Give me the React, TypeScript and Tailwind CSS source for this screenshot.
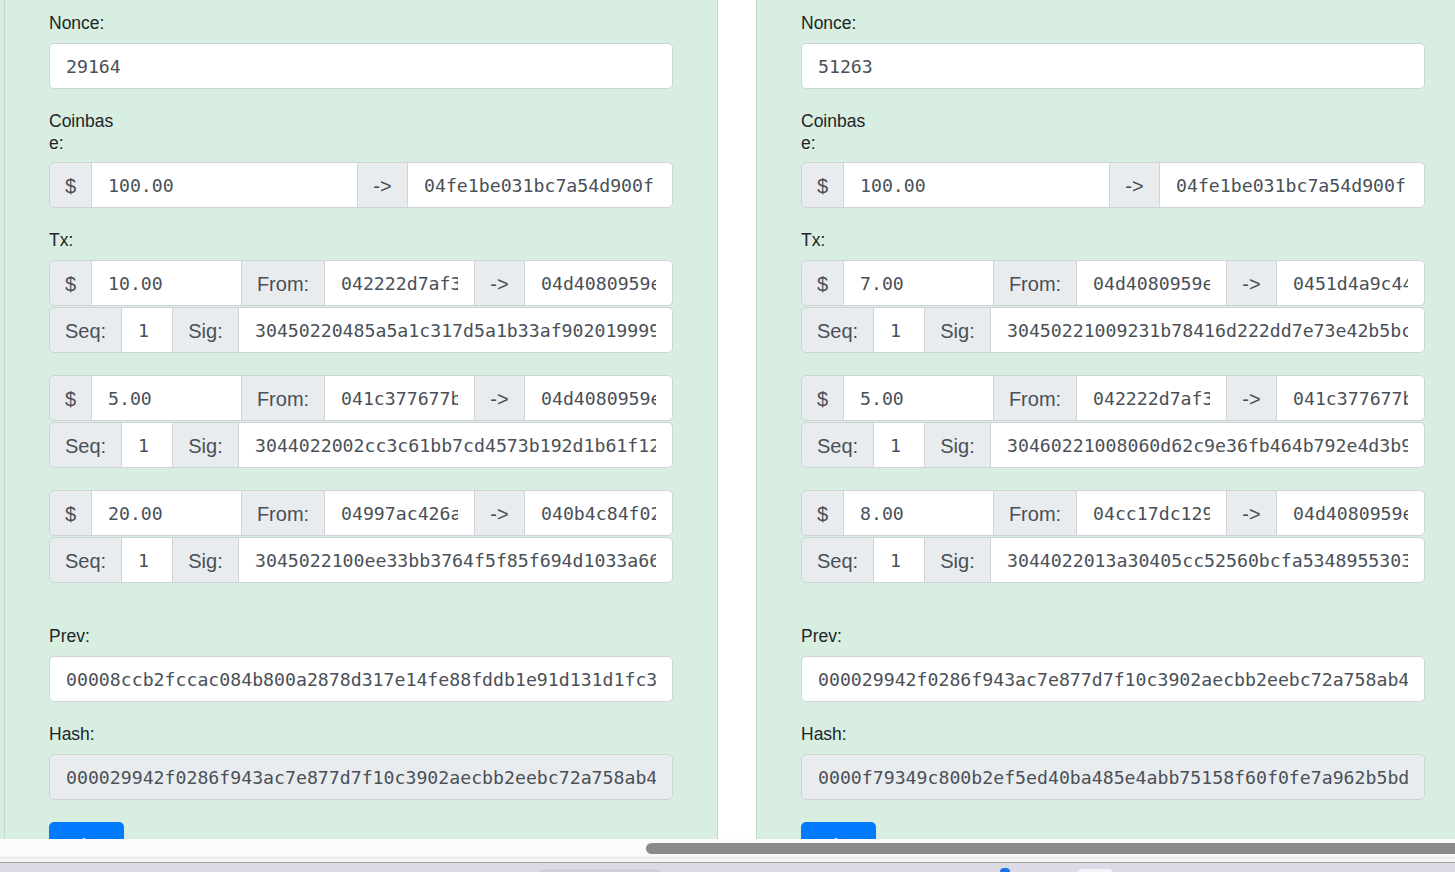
import React from "react";

type Cell = { kind: "addon" | "input"; text: string; w: string };

const sans = "font-['Liberation_Sans',Arial,sans-serif]";
const mono = "font-['DejaVu_Sans_Mono',monospace]";

const blocks = [
  {
    nonce: "29164",
    coinbase: "04fe1be031bc7a54d900f1cd5e3b1e8c0b2a7f",
    txs: [
      { amt: "10.00", from: "042222d7af3a1b", to: "04d4080959e8c2", sig: "30450220485a5a1c317d5a1b33af902019999e4c1a7" },
      { amt: "5.00", from: "041c377677b9d3", to: "04d4080959e8c2", sig: "3044022002cc3c61bb7cd4573b192d1b61f12a9e07b" },
      { amt: "20.00", from: "04997ac426a5e1", to: "040b4c84f02d7a", sig: "3045022100ee33bb3764f5f85f694d1033a66b2c8f1" },
    ],
    prev: "00008ccb2fccac084b800a2878d317e14fe88fddb1e91d131d1fc3a2b7e4",
    hash: "000029942f0286f943ac7e877d7f10c3902aecbb2eebc72a758ab4c1e9d2",
  },
  {
    nonce: "51263",
    coinbase: "04fe1be031bc7a54d900f1cd5e3b1e8c0b2a7f",
    txs: [
      { amt: "7.00", from: "04d4080959e8c2", to: "0451d4a9c44b7e", sig: "30450221009231b78416d222dd7e73e42b5bc8f0a2d" },
      { amt: "5.00", from: "042222d7af3a1b", to: "041c377677b9d3", sig: "30460221008060d62c9e36fb464b792e4d3b9a51c7e" },
      { amt: "8.00", from: "04cc17dc129f4a", to: "04d4080959e8c2", sig: "3044022013a30405cc52560bcfa5348955303d8b6f2" },
    ],
    prev: "000029942f0286f943ac7e877d7f10c3902aecbb2eebc72a758ab4c1e9d2",
    hash: "0000f79349c800b2ef5ed40ba485e4abb75158f60f0fe7a962b5bd7a0c38",
  },
];

function Group({ cells }: { cells: Cell[] }) {
  return (
    <div className="flex h-[46px]">
      {cells.map((c, i) =>
        c.kind === "addon" ? (
          <div
            key={i}
            className={`${c.w} ${sans} -ml-px first:ml-0 flex shrink-0 items-center justify-center border border-[#ced4da] bg-[#e9ecef] pt-px text-[20px] text-[#495057] first:rounded-l-[5px] last:rounded-r-[5px]`}
          >
            {c.text}
          </div>
        ) : (
          <input
            key={i}
            readOnly
            defaultValue={c.text}
            className={`${c.w} ${mono} -ml-px first:ml-0 min-w-0 border border-[#ced4da] bg-white px-4 pt-[2px] text-[18.2px] text-[#495057] outline-none first:rounded-l-[5px] last:rounded-r-[5px]`}
          />
        )
      )}
    </div>
  );
}

function Label({ children, className = "" }: { children: React.ReactNode; className?: string }) {
  return (
    <div className={`${sans} pt-[2px] text-[17.5px] leading-[22px] text-[#212529] ${className}`}>
      {children}
    </div>
  );
}

function Block({ b }: { b: (typeof blocks)[number] }) {
  return (
    <div className="w-[714px] shrink-0 border-x border-[#bfdcc8] bg-[#d7eee0] px-[44px] pt-[10px]">
      <Label className="mb-[9px]">Nonce:</Label>
      <input
        readOnly
        defaultValue={b.nonce}
        className={`${mono} mb-[19px] block h-[46px] w-full rounded-[5px] border border-[#ced4da] bg-white px-4 pt-px text-[18.2px] text-[#495057] outline-none`}
      />

      <Label className="mb-[8px] w-[70px] break-all">Coinbase:</Label>
      <div className="mb-[19px]">
        <Group
          cells={[
            { kind: "addon", text: "$", w: "w-[43px]" },
            { kind: "input", text: "100.00", w: "w-[267px]" },
            { kind: "addon", text: "->", w: "w-[51px]" },
            { kind: "input", text: b.coinbase, w: "flex-1" },
          ]}
        />
      </div>

      <Label className="mb-[9px]">Tx:</Label>
      <div className="flex flex-col gap-[22px]">
        {b.txs.map((t, i) => (
          <div key={i} className="flex flex-col gap-px">
            <Group
              cells={[
                { kind: "addon", text: "$", w: "w-[43px]" },
                { kind: "input", text: t.amt, w: "w-[151px]" },
                { kind: "addon", text: "From:", w: "w-[84px]" },
                { kind: "input", text: t.from, w: "w-[151px]" },
                { kind: "addon", text: "->", w: "w-[51px]" },
                { kind: "input", text: t.to, w: "flex-1" },
              ]}
            />
            <Group
              cells={[
                { kind: "addon", text: "Seq:", w: "w-[73px]" },
                { kind: "input", text: "1", w: "w-[52px]" },
                { kind: "addon", text: "Sig:", w: "w-[67px]" },
                { kind: "input", text: t.sig, w: "flex-1" },
              ]}
            />
          </div>
        ))}
      </div>

      <Label className="mt-[40px] mb-[9px]">Prev:</Label>
      <input
        readOnly
        defaultValue={b.prev}
        className={`${mono} mb-[19px] block h-[46px] w-full rounded-[5px] border border-[#ced4da] bg-white px-4 pt-px text-[18.2px] text-[#495057] outline-none`}
      />

      <Label className="mb-[9px]">Hash:</Label>
      <input
        readOnly
        defaultValue={b.hash}
        className={`${mono} block h-[46px] w-full rounded-[5px] border border-[#ced4da] bg-[#e9ecef] px-4 pt-px text-[18.2px] text-[#495057] outline-none`}
      />

      <button
        className={`${sans} mt-[22px] h-[44px] w-[75px] rounded-[5px] bg-[#007bff] pt-[4px] text-[20px] leading-[24px] text-white`}
      >
        Mine
      </button>
    </div>
  );
}

export default function App() {
  return (
    <div className="flex h-[872px] w-[1455px] flex-col overflow-hidden bg-white">
      {/* page, scrolled sideways */}
      <div className="flex h-[839px] shrink-0 overflow-hidden bg-white">
        <div className="w-[4px] shrink-0 bg-[#d7eee0]" />
        <Block b={blocks[0]} />
        <div className="w-[38px] shrink-0" />
        <Block b={blocks[1]} />
      </div>

      {/* horizontal scrollbar */}
      <div className="flex h-[18px] shrink-0 items-center bg-[#fbfbfb] pl-[646px]">
        <div className="h-[11px] flex-1 rounded-l-full bg-[#8a8a8a]" />
      </div>
      <div className="h-[5px] shrink-0 border-t border-[#e6e6e6] bg-[#f4f4f4]" />

      {/* browser bottom bar */}
      <div className="flex flex-1 items-end border-t border-[#a3a3a3] bg-[#dcdae5]">
        <div className="ml-[540px] h-[3px] w-[120px] rounded-t bg-[#cfcdd8]" />
        <div className="ml-[340px] h-[4px] w-[10px] rounded-t-full bg-[#1a73e8]" />
        <div className="ml-[68px] h-[3px] w-[34px] rounded-t bg-[#f3f2f7]" />
      </div>
    </div>
  );
}
